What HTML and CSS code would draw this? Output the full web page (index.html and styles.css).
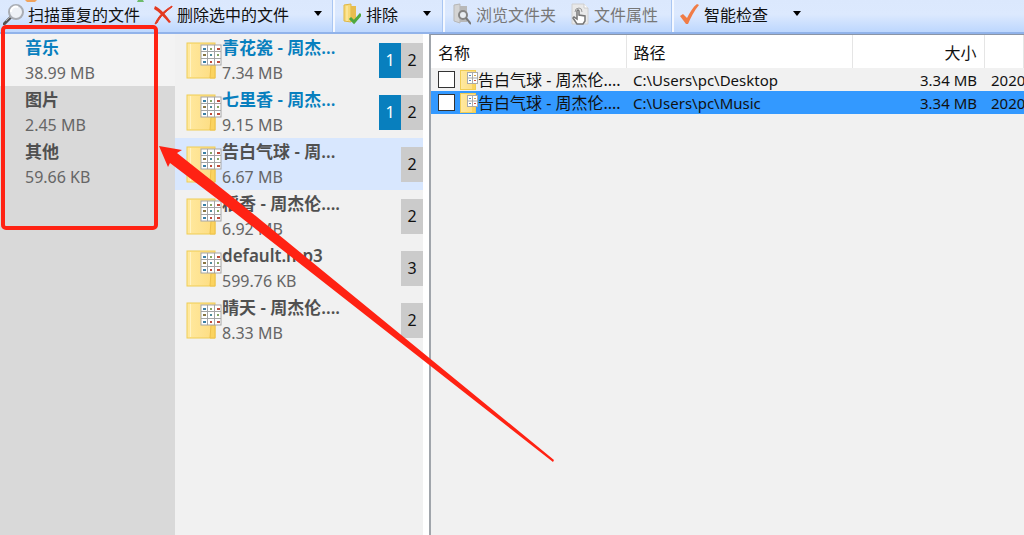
FILE: index.html
```html
<!DOCTYPE html>
<html lang="zh-CN">
<head>
<meta charset="utf-8">
<title>重复文件</title>
<link rel="stylesheet" href="styles.css">
</head>
<body>
<svg class="defs" aria-hidden="true">
  <defs>
    <linearGradient id="paper"><stop offset="0" stop-color="#ffe9a0"/><stop offset="1" stop-color="#fddc80"/></linearGradient>
    <symbol id="folder" viewBox="0 0 36 37">
      <rect x="1" y="1" width="28" height="35" fill="url(#paper)" stroke="#f0cd55"/>
      <path d="M4.500 2v33" stroke="#fff3c4"/>
      <path d="M25 23h4v13h-5z" fill="#fbd35f" stroke="#eec14a"/>
      <rect x="15" y="3" width="20" height="20" fill="#fff" stroke="#a5a5a5"/>
      <path d="M21.500 3v20M28.500 3v20M15 9.500h20M15 16.500h20" stroke="#a5a5a5"/>
      <path d="M17 6h3v2h-3zM17 19h3v2h-3z" fill="#3b7fa6"/>
      <path d="M24 6h2v2h-2zM31 12h2v2h-2z" fill="#85a562"/>
      <path d="M31 6h3v2h-3zM31 19h3v2h-3zM24 19h2v2h-2z" fill="#bd4b3b"/>
      <path d="M17 12h3v2h-3z" fill="#8a7746"/><path d="M24 12h2v2h-2z" fill="#508d9c"/>
    </symbol>
    <symbol id="folder-small" viewBox="0 0 18 20">
      <rect x="0.500" y="0.500" width="15" height="19" fill="url(#paper)" stroke="#f0cd55"/>
      <path d="M12 13h3v6h-3z" fill="#fbd35f"/>
      <rect x="7.500" y="2.500" width="10" height="11" fill="#fff" stroke="#aaa"/>
      <path d="M12.500 3v10M8 8h9" stroke="#aaa"/>
      <path d="M9 5h2v1H9zM9 10h2v1H9z" fill="#528bc2"/><path d="M14 5h2v1h-2z" fill="#d9a643"/><path d="M14 10h2v1h-2z" fill="#d05344"/>
    </symbol>
  </defs>
</svg>

<header class="toolbar" role="toolbar">
  <div class="group group-main">
    <button class="tool tool-scan" type="button">
      <svg class="icon" viewBox="0 0 22 22"><path d="M8 14 1 21" stroke="#555" stroke-width="3" stroke-linecap="round"/><path d="M8 13 3 18" stroke="#aaa"/><circle cx="13" cy="9" r="7" fill="#eef1f6" stroke="#a9adb4" stroke-width="2"/><path d="M8 9a5 5 0 0 1 7-5" fill="none" stroke="#fff" stroke-width="2"/></svg>
      扫描重复的文件</button>
    <button class="tool tool-delete" type="button">
      <svg class="icon" viewBox="0 0 22 22"><path d="M3 3 2 6c5 3 10 8 15 14l2-1C14 12 9 6 3 3z" fill="#e33a20"/><path d="M20 3C13 7 6 13 3 21l2-1C8 14 13 9 20 4z" fill="#e33a20" stroke="#e33a20"/></svg>
      删除选中的文件</button>
    <button class="drop" type="button" aria-label="删除选项"></button>
  </div>
  <div class="group group-exclude">
    <button class="tool" type="button">
      <svg class="icon icon-narrow" viewBox="0 0 18 22"><path d="M1 2l7-1v18l-7-1z" fill="#f7d978" stroke="#dfb846"/><path d="M8 3h5v14l-5 2z" fill="#e7bd4e"/><path d="M4 3v15" stroke="#fff1b7"/><path d="m7 15 4 4 7-8" fill="none" stroke="#4fa83e" stroke-width="3"/></svg>
      排除</button>
    <button class="drop" type="button" aria-label="排除选项"></button>
  </div>
  <div class="group group-files">
    <button class="tool" type="button" disabled>
      <svg class="icon icon-narrow" viewBox="0 0 18 22"><path d="M1 2l6-1v19l-6-2z" fill="#d4d4d4" stroke="#b7b7b7"/><path d="M7 3h7v16H7z" fill="#b8b8b8"/><circle cx="10" cy="12" r="4" fill="#e8edf2" stroke="#858585" stroke-width="2"/><path d="m13 15 5 6" stroke="#777" stroke-width="2"/></svg>
      浏览文件夹</button>
    <button class="tool tool-props" type="button" disabled>
      <svg class="icon icon-narrow" viewBox="0 0 18 22"><path d="M1 1h12l4 4v16H1z" fill="#e9e9e9" stroke="#d0d0d0"/><path d="M13 1v4h4" fill="#fff" stroke="#ccc"/><path d="M6 21 2 15l1-1 3 2V8q1-2 2 0v4l6 1v5l-2 3z" fill="#fff" stroke="#777" stroke-width="1.500"/><path d="M4 9q0-4 4-4 3 0 3 4" fill="none" stroke="#999"/></svg>
      文件属性</button>
  </div>
  <div class="group group-check">
    <button class="tool" type="button">
      <svg class="icon icon-check" viewBox="0 0 20 22"><path d="m1 13 3-2 4 4C11 9 14 4 18 1l2 1C15 8 12 14 9 21H7z" fill="#f07c46"/></svg>
      智能检查</button>
    <button class="drop" type="button" aria-label="检查选项"></button>
  </div>
</header>

<main class="workspace">
  <nav class="categories">
    <a class="entry active" href="#music"><strong>音乐</strong><span>38.99 MB</span></a>
    <a class="entry" href="#pictures"><strong>图片</strong><span>2.45 MB</span></a>
    <a class="entry" href="#others"><strong>其他</strong><span>59.66 KB</span></a>
  </nav>

  <section class="groups">
    <a class="match marked" href="#g1"><svg class="folder"><use href="#folder"/></svg><span class="entry"><strong>青花瓷 - 周杰...</strong><span>7.34 MB</span></span><b class="badge blue">1</b><b class="badge">2</b></a>
    <a class="match marked" href="#g2"><svg class="folder"><use href="#folder"/></svg><span class="entry"><strong>七里香 - 周杰...</strong><span>9.15 MB</span></span><b class="badge blue">1</b><b class="badge">2</b></a>
    <a class="match current" href="#g3"><svg class="folder"><use href="#folder"/></svg><span class="entry"><strong>告白气球 - 周...</strong><span>6.67 MB</span></span><b class="badge">2</b></a>
    <a class="match" href="#g4"><svg class="folder"><use href="#folder"/></svg><span class="entry"><strong>稻香 - 周杰伦....</strong><span>6.92 MB</span></span><b class="badge">2</b></a>
    <a class="match" href="#g5"><svg class="folder"><use href="#folder"/></svg><span class="entry"><strong>default.mp3</strong><span>599.76 KB</span></span><b class="badge">3</b></a>
    <a class="match" href="#g6"><svg class="folder"><use href="#folder"/></svg><span class="entry"><strong>晴天 - 周杰伦....</strong><span>8.33 MB</span></span><b class="badge">2</b></a>
  </section>

  <section class="details">
    <table class="files">
      <colgroup><col class="c-name"><col class="c-path"><col class="c-size"><col class="c-date"></colgroup>
      <thead><tr><th>名称</th><th>路径</th><th class="size">大小</th><th></th></tr></thead>
      <tbody>
        <tr><td class="name"><label class="file"><input type="checkbox"><svg class="folder-small"><use href="#folder-small"/></svg>告白气球 - 周杰伦....</label></td><td>C:\Users\pc\Desktop</td><td class="size">3.34 MB</td><td>2020</td></tr>
        <tr class="selected"><td class="name"><label class="file"><input type="checkbox"><svg class="folder-small"><use href="#folder-small"/></svg>告白气球 - 周杰伦....</label></td><td>C:\Users\pc\Music</td><td class="size">3.34 MB</td><td>2020</td></tr>
      </tbody>
    </table>
  </section>
</main>

<svg class="callout" viewBox="0 0 560 470" aria-hidden="true">
  <path d="M25 0h12l-2 2h-8z" fill="#f0a35c"/>
  <path d="M138 0h5l1 2h-7z" fill="#6dbb6a"/>
  <rect x="3" y="27" width="153" height="201" rx="3" fill="none" stroke="#ff2213" stroke-width="4"/>
  <path d="M159 146 182 150 177 153 235 199 554 460 553 462 220 201 170 163 168 167z" fill="#ff2213"/>
</svg>
</body>
</html>
```
FILE: styles.css
```css
* { box-sizing: border-box; }
body {
  margin: 0;
  height: 100vh;
  display: flex;
  flex-direction: column;
  overflow: hidden;
  background: #f1f1f1;
  color: #111;
  font: 15px/22px "Noto Sans", "Noto Sans CJK SC", sans-serif;
}
a { color: inherit; text-decoration: none; }
.defs { position: absolute; width: 0; height: 0; }

.toolbar {
  display: flex;
  flex: none;
  height: 34px;
  border-bottom: 2px solid #91b3ea;
  background: linear-gradient(#dbe8fd, #dce9fe 45%, #bdd7fe);
}
.group {
  display: flex;
  align-items: center;
  padding: 0 8px 5px;
  border-right: 2px solid #f4f8ff;
  box-shadow: inset -1px 0 #a9c6f2;
}
.group-main { width: 335px; padding-left: 3px; }
.group-exclude { width: 110px; }
.group-files { width: 229px; }
.group-check { flex: 1; border: 0; padding-left: 5px; box-shadow: none; }
.tool, .drop { padding: 0; border: 0; background: none; color: #111; }
.tool {
  display: flex;
  align-items: center;
  gap: 5px;
  font: 16px/22px "Noto Sans CJK SC", sans-serif;
  white-space: nowrap;
}
.tool:disabled { color: #777; }
.tool-scan, .tool-delete { gap: 3px; }
.tool-delete { margin-left: 12px; }
.tool-props { margin-left: 15px; }
.icon { width: 22px; height: 22px; }
.icon-narrow { width: 18px; }
.icon-check { width: 20px; }
.drop {
  margin-left: 25px;
  border: 4px solid transparent;
  border-top: 5px solid #000;
  border-bottom: 0;
}

.workspace { display: flex; flex: 1; min-height: 0; }
.categories { flex: none; width: 175px; background: #d9d9d9; }
.entry { display: block; height: 52px; color: #666; font-size: 16px; }
.entry strong, .entry span { display: block; white-space: nowrap; }
.entry strong {
  color: #505050;
  font-size: 17px;
  line-height: 28px;
  font-weight: 600;
}
.categories .entry { padding-left: 25px; }
.categories .active { background: #f3f3f3; }
.categories .active strong, .marked strong { color: #087fbe; }

.groups { flex: none; width: 254px; border-right: 6px solid #fff; }
.match { display: flex; align-items: center; height: 52px; padding-left: 11px; }
.match .entry { flex: 1; }
.current { background: #d8e7fe; }
.folder { width: 36px; height: 37px; }
.badge {
  width: 22px;
  height: 35px;
  background: #cbcbcb;
  color: #111;
  font-size: 16px;
  font-weight: 400;
  line-height: 35px;
  text-align: center;
}
.blue { background: #087fbe; color: #fff; }

.details {
  flex: 1;
  min-width: 0;
  overflow: hidden;
  border-top: 1px solid #8b95a6;
  border-left: 2px solid #a0a5ab;
}
.files { width: 100%; table-layout: fixed; border-collapse: collapse; }
.c-name { width: 195px; }
.c-path { width: 226px; }
.c-size { width: 132px; }
th {
  height: 33px;
  padding: 3px 7px 0;
  border-right: 1px solid #e5e5e5;
  background: #fff;
  font-size: 16px;
  font-weight: 400;
  text-align: left;
}
td { height: 23px; padding: 0 0 0 7px; overflow: hidden; white-space: nowrap; }
.files .size { padding-right: 7px; text-align: right; }
.selected { background: #3399ff; }
.file { display: flex; align-items: center; font-size: 16px; }
.file input {
  appearance: none;
  width: 17px;
  height: 17px;
  margin: 0 5px 0 0;
  border: 1px solid #333;
  background: #fff;
}
.folder-small { flex: none; width: 18px; height: 20px; }

.callout { position: absolute; top: 0; left: 0; width: 560px; height: 470px; pointer-events: none; }
```
